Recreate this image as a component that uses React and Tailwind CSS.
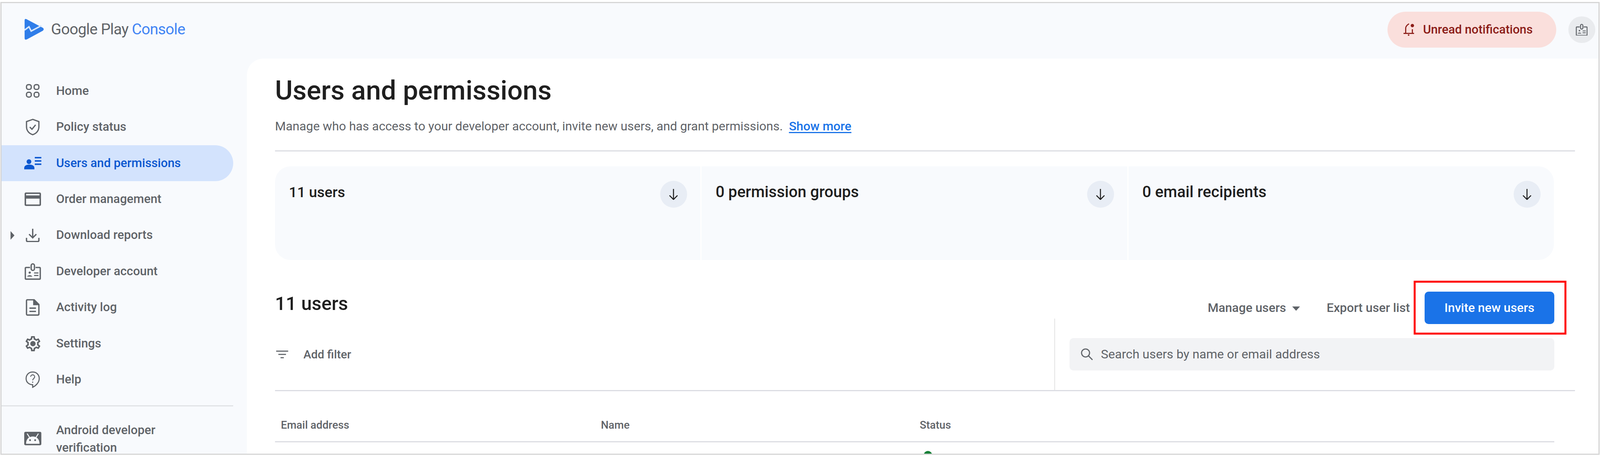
import React from "react";

const Logo = () => (
  <svg className="w-[1.206vw]" viewBox="0 0 53 58">
    <path d="M5 1 L50 25 Q55 29 50 33 L6 57 Q0 59 0 53 V5 Q0 -1 5 1 Z" fill="#2f7de9" />
    <path d="M0 31 L12 22 L18 34 L46 19" fill="none" stroke="#d5e6fb" strokeWidth="4" />
  </svg>
);

const HomeIcon = () => (
  <svg className="w-[0.865vw]" viewBox="0 0 38 38" fill="none" stroke="currentColor" strokeWidth="3.4">
    <rect x="2" y="2" width="13" height="13" rx="5" />
    <rect x="23" y="2" width="13" height="13" rx="5" />
    <rect x="2" y="23" width="13" height="13" rx="5" />
    <rect x="23" y="23" width="13" height="13" rx="5" />
  </svg>
);

const PolicyIcon = () => (
  <svg className="w-[0.865vw]" viewBox="0 0 38 46" fill="none" stroke="currentColor" strokeWidth="3.4">
    <path d="M19 2 L36 8 V22 C36 33 29 41 19 44 C9 41 2 33 2 22 V8 Z" />
    <path d="M11 23 L17 29 L27 17" />
  </svg>
);

const UsersIcon = () => (
  <svg className="w-[1.07vw]" viewBox="0 0 47 34" fill="currentColor">
    <circle cx="13" cy="13" r="6.5" />
    <path d="M0 34 V30 C0 24 7 21 14 21 C21 21 28 24 28 30 V34 Z" />
    <rect x="29" y="0" width="18" height="4" />
    <rect x="29" y="9" width="18" height="4" />
    <rect x="29" y="18" width="18" height="4" />
  </svg>
);

const CardIcon = () => (
  <svg className="w-[1.024vw]" viewBox="0 0 45 37" fill="currentColor">
    <path fillRule="evenodd" d="M4 0 H41 Q45 0 45 4 V33 Q45 37 41 37 H4 Q0 37 0 33 V4 Q0 0 4 0 Z M4 4 V8 H41 V4 Z M4 17 V33 H41 V17 Z" />
  </svg>
);

const DownloadIcon = () => (
  <svg className="w-[0.865vw]" viewBox="0 0 38 38" fill="none" stroke="currentColor" strokeWidth="3.6">
    <path d="M19 1 V26" />
    <path d="M9 16 L19 26 L29 16" />
    <path d="M2 26 V33 Q2 36 5 36 H33 Q36 36 36 33 V26" />
  </svg>
);

const BadgeIcon = ({ className }) => (
  <svg className={className} viewBox="0 0 45 46" fill="none" stroke="currentColor" strokeWidth="3.6">
    <path d="M15 12 H4 Q2 12 2 14 V42 Q2 44 4 44 H41 Q43 44 43 42 V14 Q43 12 41 12 H30" />
    <rect x="18" y="2" width="9" height="18" rx="4.5" />
    <circle cx="14" cy="26" r="3" fill="currentColor" stroke="none" />
    <path d="M7 37 C8 32 20 32 21 37 Z" fill="currentColor" stroke="none" />
    <path d="M26 27 H38 M26 34 H38" strokeWidth="3" />
  </svg>
);

const DocIcon = () => (
  <svg className="w-[0.865vw]" viewBox="0 0 38 46" fill="none" stroke="currentColor" strokeWidth="3.6">
    <path d="M4 2 H23 L36 15 V41 Q36 44 33 44 H5 Q2 44 2 41 V5 Q2 2 4 2 Z" />
    <path d="M22 2 V15 H36" fill="currentColor" />
    <path d="M10 25 H28 M10 34 H28" />
  </svg>
);

const GearIcon = () => (
  <svg className="w-[1.138vw]" viewBox="0 0 24 24" fill="currentColor">
    <path d="M19.43 12.98c.04-.32.07-.64.07-.98 0-.34-.03-.66-.07-.98l2.11-1.65c.19-.15.24-.42.12-.64l-2-3.46c-.09-.16-.26-.25-.44-.25-.06 0-.12.01-.17.03l-2.49 1c-.52-.4-1.08-.73-1.69-.98l-.38-2.65C14.46 2.18 14.25 2 14 2h-4c-.25 0-.46.18-.49.42l-.38 2.65c-.61.25-1.17.59-1.69.98l-2.49-1c-.06-.02-.12-.03-.18-.03-.17 0-.34.09-.43.25l-2 3.46c-.13.22-.07.49.12.64l2.11 1.65c-.04.32-.07.65-.07.98 0 .33.03.66.07.98l-2.11 1.65c-.19.15-.24.42-.12.64l2 3.46c.09.16.26.25.44.25.06 0 .12-.01.17-.03l2.49-1c.52.4 1.08.73 1.69.98l.38 2.65c.03.24.24.42.49.42h4c.25 0 .46-.18.49-.42l.38-2.65c.61-.25 1.17-.59 1.69-.98l2.49 1c.06.02.12.03.18.03.17 0 .34-.09.43-.25l2-3.46c.12-.22.07-.49-.12-.64l-2.11-1.65zm-1.98-1.71c.04.31.05.52.05.73 0 .21-.02.43-.05.73l-.14 1.13.89.7 1.08.84-.7 1.21-1.27-.51-1.04-.42-.9.68c-.43.32-.84.56-1.25.73l-1.06.43-.16 1.13-.2 1.35h-1.4l-.19-1.35-.16-1.13-1.06-.43c-.43-.18-.83-.41-1.23-.71l-.91-.7-1.06.43-1.27.51-.7-1.21 1.08-.84.89-.7-.14-1.13c-.03-.31-.05-.54-.05-.74s.02-.43.05-.73l.14-1.13-.89-.7-1.08-.84.7-1.21 1.27.51 1.04.42.9-.68c.43-.32.84-.56 1.25-.73l1.06-.43.16-1.13.2-1.35h1.39l.19 1.35.16 1.13 1.06.43c.43.18.83.41 1.23.71l.91.7 1.06-.43 1.27-.51.7 1.21-1.07.85-.89.7.14 1.13z" />
    <circle cx="12" cy="12" r="3.5" />
  </svg>
);

const HelpIcon = () => (
  <svg className="w-[0.91vw]" viewBox="0 0 40 46" fill="none" stroke="currentColor" strokeWidth="3">
    <path d="M20 2 C9 2 2 10 2 20 C2 30 10 37 20 37 V44 C30 39 38 30 38 20 C38 10 31 2 20 2 Z" />
    <path d="M14.5 15 C15 8 25 8 25.5 15 C25.5 20 20 20 20 25" strokeWidth="2.6" />
    <circle cx="20" cy="30" r="1.7" fill="currentColor" stroke="none" />
  </svg>
);

const AndroidIcon = () => (
  <svg className="w-[1.07vw]" viewBox="0 0 47 37">
    <rect width="47" height="37" rx="4" fill="currentColor" />
    <path d="M5 33 C5 22 11 13 23.5 13 C36 13 42 22 42 33 Z" fill="#f8fafd" />
    <path d="M8 5 L15 16 M39 5 L32 16" stroke="#f8fafd" strokeWidth="2.6" />
    <circle cx="16" cy="23" r="2.5" fill="currentColor" />
    <circle cx="30" cy="23" r="2.5" fill="currentColor" />
  </svg>
);

const BellIcon = () => (
  <svg className="w-[0.683vw]" viewBox="0 0 30 36" fill="none" stroke="currentColor" strokeWidth="3">
    <path d="M15 2 C9 6 6 9 6 14 V28" />
    <path d="M24.3 17 V28" />
    <path d="M0 28.5 H29" />
    <circle cx="24.3" cy="7" r="4.6" fill="currentColor" stroke="none" />
    <circle cx="14" cy="33" r="2.2" fill="currentColor" stroke="none" />
  </svg>
);

const ArrowDown = () => (
  <svg className="w-[0.592vw]" viewBox="0 0 26 32" fill="none" stroke="#1f1f1f" strokeWidth="2.8">
    <path d="M13 1 V30" />
    <path d="M2 19 L13 30 L24 19" />
  </svg>
);

const FilterIcon = () => (
  <svg className="w-[0.751vw]" viewBox="0 0 33 22" fill="currentColor">
    <rect x="0" y="0" width="33" height="3" />
    <rect x="6" y="9" width="21" height="3" />
    <rect x="12" y="18" width="9" height="3" />
  </svg>
);

const SearchIcon = () => (
  <svg className="w-[0.796vw]" viewBox="0 0 35 35" fill="none" stroke="currentColor" strokeWidth="3">
    <circle cx="14" cy="14" r="11" />
    <path d="M22 22 L33 33" />
  </svg>
);

const navItems = [
  { label: "Home", icon: <HomeIcon /> },
  { label: "Policy status", icon: <PolicyIcon /> },
  { label: "Users and permissions", icon: <UsersIcon />, active: true },
  { label: "Order management", icon: <CardIcon /> },
  { label: "Download reports", icon: <DownloadIcon />, caret: true },
  { label: "Developer account", icon: <BadgeIcon className="w-[1.024vw]" /> },
  { label: "Activity log", icon: <DocIcon /> },
  { label: "Settings", icon: <GearIcon /> },
  { label: "Help", icon: <HelpIcon /> },
];

const NavItem = ({ label, icon, active, caret }) => (
  <div
    className={`flex h-[92.4px] w-[14.47vw] items-center rounded-r-full text-[0.762vw] font-medium ${
      active ? "bg-[#d3e3fd] text-[#0b57d0]" : "text-[#5f6368]"
    }`}
  >
    <div className="w-[1.34vw] pl-[0.55vw]">
      {caret && <div className="h-0 w-0 border-y-[11px] border-l-[0.25vw] border-y-transparent border-l-[#5f6368]" />}
    </div>
    <div className="flex w-[1.23vw] justify-center">{icon}</div>
    <span className="ml-[0.84vw]">{label}</span>
  </div>
);

const StatCard = ({ title, rounded, text }) => (
  <div className={`flex h-[240px] flex-1 items-start justify-between bg-[#f8fafd] pl-[0.865vw] pr-[0.84vw] pt-[37px] ${rounded}`}>
    <span className={`${text} font-medium leading-[58px] text-[#1f1f1f]`}>{title}</span>
    <div className="flex size-[1.684vw] items-center justify-center rounded-full bg-[#e8edf5]">
      <ArrowDown />
    </div>
  </div>
);

export default function App() {
  return (
    <div className="h-[1168px] w-full overflow-hidden bg-white pb-[3px] pl-[1px] pr-[1px] pt-[5px] font-['Roboto',sans-serif]">
      <div className="flex h-full flex-col border-[3px] border-[#d6d6d6] bg-[#f8fafd]">
        <header className="flex h-[142px] shrink-0 items-start justify-between">
          <div className="ml-[1.43vw] mt-[38px] flex items-center">
            <Logo />
            <span className="ml-[0.455vw] text-[0.955vw] tracking-[-0.8px] text-[#5f6368]">
              Google Play <span className="text-[#4285f4]">Console</span>
            </span>
          </div>
          <div className="mr-[0.2vw] mt-[22px] flex items-center">
            <div className="flex h-[92px] w-[10.56vw] items-center rounded-full bg-[#fadfdc] pl-[1vw] text-[0.76vw] font-medium text-[#8c1d18]">
              <BellIcon />
              <span className="ml-[0.546vw]">Unread notifications</span>
            </div>
            <div className="ml-[0.75vw] flex size-[1.684vw] items-center justify-center rounded-full bg-[#e9ebee] text-[#5f6368]">
              <BadgeIcon className="w-[0.74vw]" />
            </div>
          </div>
        </header>
        <div className="flex min-h-0 flex-1">
          <aside className="w-[15.34vw] shrink-0 pt-[37px]">
            {navItems.map((item) => (
              <NavItem key={item.label} {...item} />
            ))}
            <div className="mt-[19px] h-[3px] w-[14.47vw] bg-[#e1e3e6]" />
            <div className="mt-[38px] flex w-[14.47vw] items-center text-[0.762vw] font-medium leading-[45px] text-[#5f6368]">
              <div className="w-[1.34vw]" />
              <div className="flex w-[1.23vw] justify-center">
                <AndroidIcon />
              </div>
              <span className="ml-[0.84vw]">
                Android developer
                <br />
                verification
              </span>
            </div>
          </aside>
          <main className="min-w-0 flex-1 overflow-hidden rounded-tl-[42px] bg-white pl-[1.752vw] pr-[1.456vw] pt-[37px]">
            <h1 className="text-[1.69vw] font-medium leading-[90px] text-[#1f1f1f]">Users and permissions</h1>
            <p className="mt-[25px] text-[0.775vw] leading-[44px] text-[#5f6368]">
              Manage who has access to your developer account, invite new users, and grant permissions.
              <a className="ml-[0.38vw] font-medium text-[#1a73e8] underline underline-offset-4">Show more</a>
            </p>
            <div className="mt-[39px] h-[3px] bg-[#dcdde3]" />
            <div className="mr-[1.32vw] mt-[38px] flex gap-[3px]">
              <StatCard title="11 users" rounded="rounded-l-[40px]" text="text-[0.91vw]" />
              <StatCard title="0 permission groups" text="text-[0.978vw]" />
              <StatCard title="0 email recipients" rounded="rounded-r-[40px]" text="text-[0.978vw]" />
            </div>
            <div className="mr-[1.297vw] mt-[81px] flex h-[83px] items-center justify-between">
              <h2 className="-mt-[22px] text-[1.183vw] font-medium leading-[60px] text-[#1f1f1f]">11 users</h2>
              <div className="flex items-center text-[0.774vw] font-medium text-[#5f6368]">
                <span>Manage users</span>
                <div className="ml-[0.387vw] mt-[3px] h-0 w-0 border-x-[0.25vw] border-t-[11px] border-x-transparent border-t-[#5f6368]" />
                <span className="ml-[1.66vw]">Export user list</span>
                <div className="relative ml-[0.91vw]">
                  <button className="h-[83px] w-[8.123vw] rounded-[10px] bg-[#1a73e8] text-white">Invite new users</button>
                  <div className="absolute -bottom-[27px] -left-[0.683vw] -right-[0.751vw] -top-[28px] border-[5px] border-[#ff0000]" />
                </div>
              </div>
            </div>
            <div className="-mt-[14px] flex h-[186px] border-b-[3px] border-[#dcdde3]">
              <div className="flex flex-1 items-center pl-[0.07vw] pt-[2px] text-[0.728vw] font-medium text-[#5f6368]">
                <FilterIcon />
                <span className="ml-[0.955vw]">Add filter</span>
              </div>
              <div className="flex w-[32.56vw] items-center border-l-[2px] border-[#e3e3e3] pl-[0.91vw] pr-[1.297vw]">
                <div className="flex h-[83px] flex-1 items-center rounded-[10px] bg-[#f2f3f5] pl-[0.683vw] text-[0.785vw] text-[#5f6368]">
                  <SearchIcon />
                  <span className="ml-[0.478vw]">Search users by name or email address</span>
                </div>
              </div>
            </div>
            <div className="mr-[1.297vw] border-b-[3px] border-[#dcdde3]">
              <div className="grid h-[128px] grid-cols-[20vw_19.93vw_1fr] items-center pl-[0.364vw] pt-[46px] text-[0.678vw] font-medium text-[#5f6368]">
                <span>Email address</span>
                <span>Name</span>
                <span>Status</span>
              </div>
            </div>
            <div className="grid grid-cols-[20vw_19.93vw_1fr] pl-[0.364vw] pt-[22px]">
              <span />
              <span />
              <div className="ml-[0.25vw] size-[21px] rounded-full bg-[#188038]" />
            </div>
          </main>
        </div>
      </div>
    </div>
  );
}
